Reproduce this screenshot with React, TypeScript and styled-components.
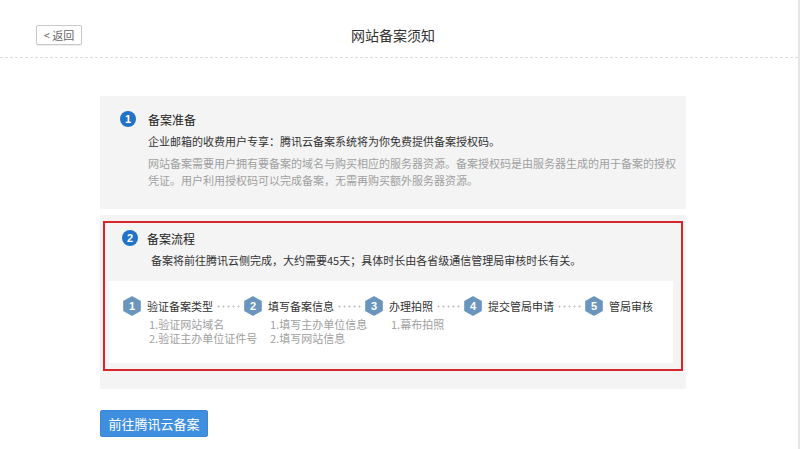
import React from 'react'
import styled, { createGlobalStyle } from 'styled-components'

const GlobalStyle = createGlobalStyle`
  html, body {
    margin: 0;
    padding: 0;
    background: #fff;
  }
  body {
    font-family: "Noto Sans CJK SC", "Liberation Sans", sans-serif;
    color: #333;
  }
`

const Page = styled.div`
  width: 800px;
  height: 449px;
  box-sizing: border-box;
  border-right: 2px solid #e6e6e6;
  overflow: hidden;
`

const Header = styled.div`
  display: grid;
  grid-template-columns: 1fr auto 1fr;
  align-items: center;
  height: 58px;
  box-sizing: border-box;
  padding: 13px 48px 0 36px;
  border-bottom: 1px dashed #dcdcdc;
`

const BackButton = styled.button`
  justify-self: start;
  width: 46px;
  height: 20px;
  padding: 0;
  border: 1px solid #c9c9c9;
  border-radius: 2px;
  background: #fff;
  box-shadow: 0 1px 1px rgba(0, 0, 0, 0.08);
  font-family: inherit;
  font-size: 11px;
  line-height: 18px;
  color: #666;
`

const Title = styled.h1`
  margin: 0;
  font-size: 14px;
  font-weight: normal;
  color: #333;
`

const Main = styled.div`
  width: 586px;
  padding: 38px 0 0 100px;
`

const Section = styled.div`
  background: #f4f4f4;
  padding: 15px 12px 20px 20px;
`

const FlowSection = styled.div`
  background: #f4f4f4;
  margin-top: 6px;
  padding: 6px 3px 18px 3px;
`

const Highlight = styled.div`
  border: 2px solid #d9262b;
  padding: 7px 8px 6px 4px;
`

const SectionHead = styled.div<{ $gap: number; $indent?: number }>`
  display: flex;
  align-items: center;
  gap: ${p => p.$gap}px;
  height: 16px;
  padding-left: ${p => p.$indent ?? 0}px;
`

const Badge = styled.span`
  display: inline-flex;
  align-items: center;
  justify-content: center;
  width: 16px;
  height: 16px;
  border-radius: 50%;
  background: #2273c7;
  color: #fff;
  font-family: "Liberation Sans", sans-serif;
  font-size: 11px;
  font-weight: bold;
`

const HeadText = styled.span`
  font-size: 12px;
  color: #222;
`

const Lead = styled.p<{ $indent: number }>`
  margin: 6px 0 0 ${p => p.$indent}px;
  font-size: 11px;
  line-height: 17px;
  color: #333;
  white-space: nowrap;
`

const Note = styled.p`
  margin: 5px 0 0 28px;
  font-size: 11px;
  line-height: 17px;
  color: #a0a0a0;
  white-space: nowrap;
`

const StepPanel = styled.div`
  margin-top: 12px;
  background: #fff;
  padding: 15px 14px 18px 14px;
  display: flex;
`

const Step = styled.div`
  display: flex;
  flex-direction: column;
`

const StepHead = styled.div`
  display: flex;
  align-items: center;
  height: 20px;
`

const HexWrap = styled.span`
  position: relative;
  display: inline-flex;
  width: 18px;
  height: 20px;
  margin-right: 6px;
  align-items: center;
  justify-content: center;
`

const HexNum = styled.span`
  position: absolute;
  inset: 0;
  display: flex;
  align-items: center;
  justify-content: center;
  color: #fff;
  font-family: "Liberation Sans", sans-serif;
  font-size: 11px;
  font-weight: bold;
`

const StepLabel = styled.span`
  font-size: 11px;
  color: #333;
  white-space: nowrap;
`

const Dots = styled.span`
  width: 24px;
  height: 3px;
  margin: 0 4px 0 3px;
  background-image: radial-gradient(circle, #c6c6c6 0.9px, transparent 1.2px);
  background-size: 5px 3px;
`

const SubList = styled.div`
  width: 0;
  margin: 1px 0 0 26px;
  white-space: nowrap;
  font-size: 11px;
  line-height: 14px;
  color: #a0a0a0;
`

const PrimaryButton = styled.button`
  margin-top: 21px;
  width: 108px;
  height: 27px;
  padding: 0;
  border: 1px solid #3a86d6;
  border-radius: 2px;
  background: #3f8fe1;
  color: #fff;
  font-family: inherit;
  font-size: 13px;
`

type StepData = {
  label: string
  items: string[]
}

const steps: StepData[] = [
  { label: '验证备案类型', items: ['1.验证网站域名', '2.验证主办单位证件号'] },
  { label: '填写备案信息', items: ['1.填写主办单位信息', '2.填写网站信息'] },
  { label: '办理拍照', items: ['1.幕布拍照'] },
  { label: '提交管局申请', items: [] },
  { label: '管局审核', items: [] },
]

function Hexagon({ num }: { num: number }) {
  return (
    <HexWrap>
      <svg width="18" height="20" viewBox="0 0 18 20">
        <polygon
          points="9,1 17,5.5 17,14.5 9,19 1,14.5 1,5.5"
          fill="#6a95bd"
          stroke="#6a95bd"
          strokeWidth="1.6"
          strokeLinejoin="round"
        />
      </svg>
      <HexNum>{num}</HexNum>
    </HexWrap>
  )
}

export default function App() {
  return (
    <Page>
      <GlobalStyle />
      <Header>
        <BackButton>&lt; 返回</BackButton>
        <Title>网站备案须知</Title>
      </Header>
      <Main>
        <Section>
          <SectionHead $gap={12}>
            <Badge>1</Badge>
            <HeadText>备案准备</HeadText>
          </SectionHead>
          <Lead $indent={28}>企业邮箱的收费用户专享：腾讯云备案系统将为你免费提供备案授权码。</Lead>
          <Note>
            网站备案需要用户拥有要备案的域名与购买相应的服务器资源。备案授权码是由服务器生成的用于备案的授权
            <br />
            凭证。用户利用授权码可以完成备案，无需再购买额外服务器资源。
          </Note>
        </Section>
        <FlowSection>
          <Highlight>
            <SectionHead $gap={9} $indent={13}>
              <Badge>2</Badge>
              <HeadText>备案流程</HeadText>
            </SectionHead>
            <Lead $indent={42}>备案将前往腾讯云侧完成，大约需要45天；具体时长由各省级通信管理局审核时长有关。</Lead>
            <StepPanel>
              {steps.map((s, i) => (
                <Step key={s.label}>
                  <StepHead>
                    <Hexagon num={i + 1} />
                    <StepLabel>{s.label}</StepLabel>
                    {i < steps.length - 1 && <Dots />}
                  </StepHead>
                  <SubList>
                    {s.items.map(item => (
                      <div key={item}>{item}</div>
                    ))}
                  </SubList>
                </Step>
              ))}
            </StepPanel>
          </Highlight>
        </FlowSection>
        <PrimaryButton>前往腾讯云备案</PrimaryButton>
      </Main>
    </Page>
  )
}
